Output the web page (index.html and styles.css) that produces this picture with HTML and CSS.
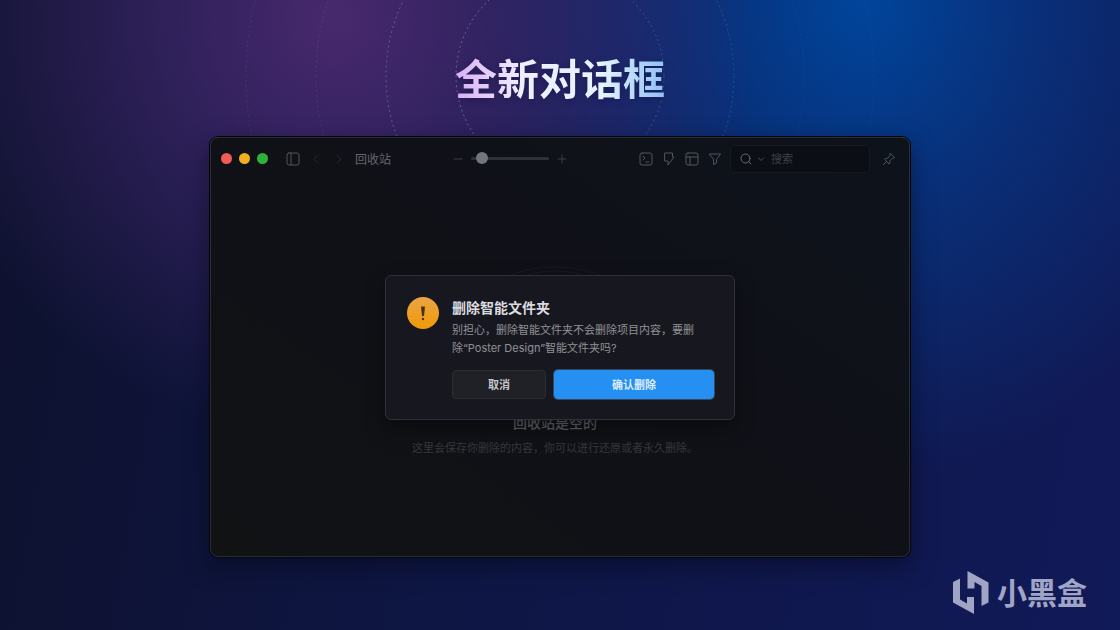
FILE: index.html
```html
<!DOCTYPE html>
<html lang="zh-CN">
<head>
	<meta charset="UTF-8">
	<title>全新对话框</title>
	<link rel="stylesheet" href="styles.css">
</head>
<body>
	<!--背景圆环-->
	<svg class="rings" width="640" height="400" viewBox="0 0 640 400" aria-hidden="true">
		<defs>
			<linearGradient id="ring" x1="0" y1="0" x2="1" y2="0">
				<stop offset="0" stop-color="#c9b8f0" stop-opacity="0.4"/>
				<stop offset="1" stop-color="#8fb0ee" stop-opacity="0.25"/>
			</linearGradient>
		</defs>
		<g fill="none" stroke="url(#ring)" stroke-dasharray="2 3">
			<circle cx="320" cy="76" r="104"/>
			<circle cx="320" cy="76" r="174" opacity="0.8"/>
			<circle cx="320" cy="76" r="244" opacity="0.25"/>
			<circle cx="320" cy="76" r="314" opacity="0.25"/>
		</g>
	</svg>

	<main class="stage">
		<h1 class="headline">全新对话框</h1>

		<!--应用窗口-->
		<section class="window">
			<header class="toolbar">
				<div class="lights">
					<span class="light red"></span>
					<span class="light yellow"></span>
					<span class="light green"></span>
				</div>
				<div class="nav">
					<button class="icon-btn" aria-label="侧边栏">
						<svg width="14" height="14" viewBox="0 0 14 14"><rect x="1" y="1" width="12" height="12" rx="2"/><path d="M5 1v12"/></svg>
					</button>
					<button class="icon-btn dim" aria-label="后退">
						<svg width="14" height="14" viewBox="0 0 14 14"><path d="M9 3L5 7l4 4"/></svg>
					</button>
					<button class="icon-btn dim" aria-label="前进">
						<svg width="14" height="14" viewBox="0 0 14 14"><path d="M5 3l4 4-4 4"/></svg>
					</button>
					<span class="place">回收站</span>
				</div>
				<div class="zoom">
					<button class="icon-btn" aria-label="缩小">
						<svg width="10" height="10" viewBox="0 0 10 10"><path d="M1 5h8"/></svg>
					</button>
					<input class="slider" type="range" min="0" max="100" value="8" aria-label="缩放">
					<button class="icon-btn" aria-label="放大">
						<svg width="10" height="10" viewBox="0 0 10 10"><path d="M1 5h8M5 1v8"/></svg>
					</button>
				</div>
				<div class="tools">
					<button class="icon-btn" aria-label="命令">
						<svg width="14" height="14" viewBox="0 0 14 14"><rect x="1" y="1" width="12" height="12" rx="2"/><path d="M4 4l2 2-2 2M7 10h3"/></svg>
					</button>
					<button class="icon-btn" aria-label="动作">
						<svg width="14" height="14" viewBox="0 0 14 14"><path d="M3 1h7.500v4H12L6 13V9H3z"/></svg>
					</button>
					<button class="icon-btn" aria-label="布局">
						<svg width="14" height="14" viewBox="0 0 14 14"><rect x="1" y="1" width="12" height="12" rx="2"/><path d="M1 5h12M5 5v8"/></svg>
					</button>
					<button class="icon-btn" aria-label="筛选">
						<svg width="14" height="14" viewBox="0 0 14 14"><path d="M1.500 2h11L8.500 7.500V11l-3 1.500v-5z"/></svg>
					</button>
				</div>
				<label class="search">
					<svg class="search-icon" width="14" height="14" viewBox="0 0 14 14"><circle cx="6.500" cy="6.500" r="4.500"/><path d="M9.800 9.800l2.200 2.200"/></svg>
					<svg width="8" height="8" viewBox="0 0 8 8"><path d="M1.500 3L4 5.500 6.500 3"/></svg>
					<input type="text" placeholder="搜索" aria-label="搜索">
				</label>
				<button class="icon-btn" aria-label="置顶">
					<svg width="14" height="14" viewBox="0 0 14 14"><path d="M8.500 1.500l4 4-1 .8-1-.1L8 8.700l-.2 2.600-.8.7L2.500 7.300l.7-.8 2.500-.3L8 3.500l-.2-1.200zM4.500 9.500L1.500 12.500"/></svg>
				</button>
			</header>

			<div class="empty">
				<svg class="empty-art" width="150" height="144" viewBox="0 0 150 144" aria-hidden="true">
					<ellipse cx="75" cy="41" rx="74" ry="40"/>
					<ellipse cx="75" cy="43" rx="62" ry="38"/>
				</svg>
				<h2>回收站是空的</h2>
				<p>这里会保存你删除的内容，你可以进行还原或者永久删除。</p>
			</div>

			<!--对话框-->
			<div class="overlay">
				<div class="dialog" role="alertdialog" aria-labelledby="dialog-title" aria-describedby="dialog-text">
					<svg class="warn" width="32" height="32" viewBox="0 0 32 32" aria-hidden="true">
						<defs>
							<linearGradient id="amber" x1="0" y1="0" x2="0" y2="1">
								<stop offset="0" stop-color="#eba446"/>
								<stop offset="1" stop-color="#f09a06"/>
							</linearGradient>
						</defs>
						<circle cx="16" cy="16" r="16" fill="url(#amber)"/>
						<path d="M14 9.500h4l-1 9.500h-2z" fill="#4a3210"/>
						<circle cx="16" cy="22" r="1.200" fill="#4a3210"/>
					</svg>
					<div class="dialog-main">
						<h2 id="dialog-title">删除智能文件夹</h2>
						<p id="dialog-text">别担心，删除智能文件夹不会删除项目内容，要删<br>除“Poster Design”智能文件夹吗?</p>
						<div class="actions">
							<button class="btn">取消</button>
							<button class="btn primary">确认删除</button>
						</div>
					</div>
				</div>
			</div>
		</section>
	</main>

	<!--水印-->
	<div class="brand">
		<svg width="36" height="44" viewBox="0 0 36 44" aria-hidden="true">
			<path d="M0 11L7 7.500V28.500L14 32.500V26H21V43L0 31.500zM14.500 0L35.500 11.500V31.500L28.500 35V15L21.500 11V17.500H14.500z"/>
		</svg>
		<span>小黑盒</span>
	</div>
</body>
</html>
```
FILE: styles.css
```css
* {
    padding: 0;
    margin: 0;
    box-sizing: border-box;
}

body {
    min-height: 100vh;
    position: relative;
    overflow: hidden;
    font-family: Inter, "Noto Sans CJK SC", sans-serif;
    background:
        radial-gradient(ellipse 420px 420px at 30% 3%, rgba(82, 44, 118, 0.85), rgba(70, 42, 115, 0.6) 40%, rgba(60, 40, 110, 0) 100%),
        radial-gradient(ellipse 400px 480px at 77% 0%, #00459c, rgba(6, 58, 140, 0.65) 45%, rgba(10, 50, 130, 0) 100%),
        linear-gradient(100deg, #0e1230 5%, #0e1644 45%, #111a58 100%);
}

button, input {
    font: inherit;
    border: 0;
    background: none;
    outline: none;
}

.rings {
    position: absolute;
    left: 50%;
    top: 0;
    margin-left: -320px;
}

.stage {
    min-height: 100vh;
    position: relative;
    display: flex;
    flex-direction: column;
    align-items: center;
    padding: 48px 0 73px;
}

.headline {
    font-size: 42px;
    line-height: 64px;
    font-weight: 700;
    margin-bottom: 25px;
    color: transparent;
    background: linear-gradient(90deg, #d9b0f5, #f0eeff 32%, #e4f4ff 70%, #8fc0f4);
    -webkit-background-clip: text;
    background-clip: text;
    filter: drop-shadow(0 2px 3px rgba(10, 10, 50, 0.4));
}

/* 窗口 */
.window {
    width: 62.5%;
    min-width: 680px;
    flex: 1;
    display: grid;
    grid-template-rows: 41px 1fr;
    border: 1px solid #2c2d34;
    border-radius: 8px;
    background: linear-gradient(215deg, #0d131b, #101118 40%, #111214);
    box-shadow: 0 0 0 1px #05060c, 0 8px 24px rgba(4, 5, 20, 0.5);
    color: #4d4e54;
}

.toolbar {
    grid-area: 1 / 1;
    display: flex;
    align-items: center;
    padding: 0 13px 0 10px;
}

.lights {
    display: flex;
    gap: 7px;
}

.light {
    width: 11px;
    height: 11px;
    border-radius: 50%;
}

.red {
    background: #ee5c54;
}

.yellow {
    background: #eeb01c;
}

.green {
    background: #2eb33a;
}

.icon-btn {
    display: flex;
    color: #53545a;
}

.icon-btn svg, .search svg {
    fill: none;
    stroke: currentColor;
    stroke-linejoin: round;
    stroke-linecap: round;
}

.icon-btn.dim {
    color: #26272d;
}

.nav {
    display: flex;
    align-items: center;
    gap: 9px;
    margin-left: 18px;
}

.place {
    font-size: 12px;
    color: #66676c;
}

.zoom {
    flex: 1;
    display: flex;
    align-items: center;
    gap: 8px;
    padding-left: 62px;
}

.zoom .icon-btn {
    color: #3c3d43;
}

.slider {
    -webkit-appearance: none;
    appearance: none;
    width: 78px;
    height: 12px;
}

.slider::-webkit-slider-runnable-track {
    height: 3px;
    border-radius: 2px;
    background: #303137;
}

.slider::-webkit-slider-thumb {
    -webkit-appearance: none;
    width: 12px;
    height: 12px;
    margin-top: -5px;
    border-radius: 50%;
    background: #74757b;
}

.tools {
    display: flex;
    gap: 9px;
}

.search {
    width: 140px;
    height: 28px;
    display: flex;
    align-items: center;
    gap: 4px;
    margin: 0 12px 0 8px;
    padding: 0 8px;
    border: 1px solid #171920;
    border-radius: 4px;
    background: #0b0e15;
}

.search svg {
    flex: none;
}

.search-icon {
    color: #6b6c72;
}

.search input {
    min-width: 0;
    flex: 1;
    padding-left: 2px;
    font-size: 11px;
    color: #8a8b90;
}

.search input::placeholder {
    color: #3e4046;
}

/* 空状态 */
.empty {
    grid-area: 2 / 1;
    display: flex;
    flex-direction: column;
    align-items: center;
    padding: 87px 10px 0 0;
}

.empty-art {
    fill: none;
    stroke: #1a1b21;
}

.empty h2 {
    margin-top: 1px;
    font-size: 14px;
    line-height: 24px;
    font-weight: 500;
    color: #5e5f64;
}

.empty p {
    margin-top: 4px;
    font-size: 11px;
    line-height: 18px;
    color: #36373c;
}

/* 对话框盖在窗口内容上 */
.overlay {
    grid-area: 1 / 1 / 3 / 2;
    display: flex;
    align-items: center;
    justify-content: center;
    z-index: 1;
    pointer-events: none;
}

.dialog {
    width: 350px;
    display: flex;
    gap: 13px;
    padding: 21px 20px 20px 21px;
    border: 1px solid #303138;
    border-radius: 6px;
    background: #17181f;
    box-shadow: 0 8px 20px rgba(0, 0, 0, 0.4);
    pointer-events: auto;
}

.warn {
    flex: none;
}

.dialog-main {
    flex: 1;
}

.dialog h2 {
    font-size: 14px;
    line-height: 22px;
    font-weight: 600;
    color: #dcdce0;
}

.dialog p {
    margin-top: 2px;
    font-size: 11px;
    line-height: 18px;
    color: #909196;
    white-space: nowrap;
}

.actions {
    display: flex;
    gap: 8px;
    margin-top: 13px;
}

.btn {
    width: 94px;
    height: 29px;
    border: 1px solid #2d2e34;
    border-radius: 4px;
    background: #1f2127;
    font-size: 11px;
    font-weight: 600;
    color: #c8c8cc;
}

.btn.primary {
    flex: 1;
    border-color: #258ff2;
    background: #258ff2;
    box-shadow: 0 0 0 1px #33465c;
    color: #dcecfc;
}

.brand {
    position: absolute;
    right: 33px;
    bottom: 15px;
    display: flex;
    align-items: center;
    gap: 8px;
    font-size: 30px;
    line-height: 44px;
    font-weight: 600;
    color: #a0a5c5;
}

.brand svg {
    fill: currentColor;
}
```
